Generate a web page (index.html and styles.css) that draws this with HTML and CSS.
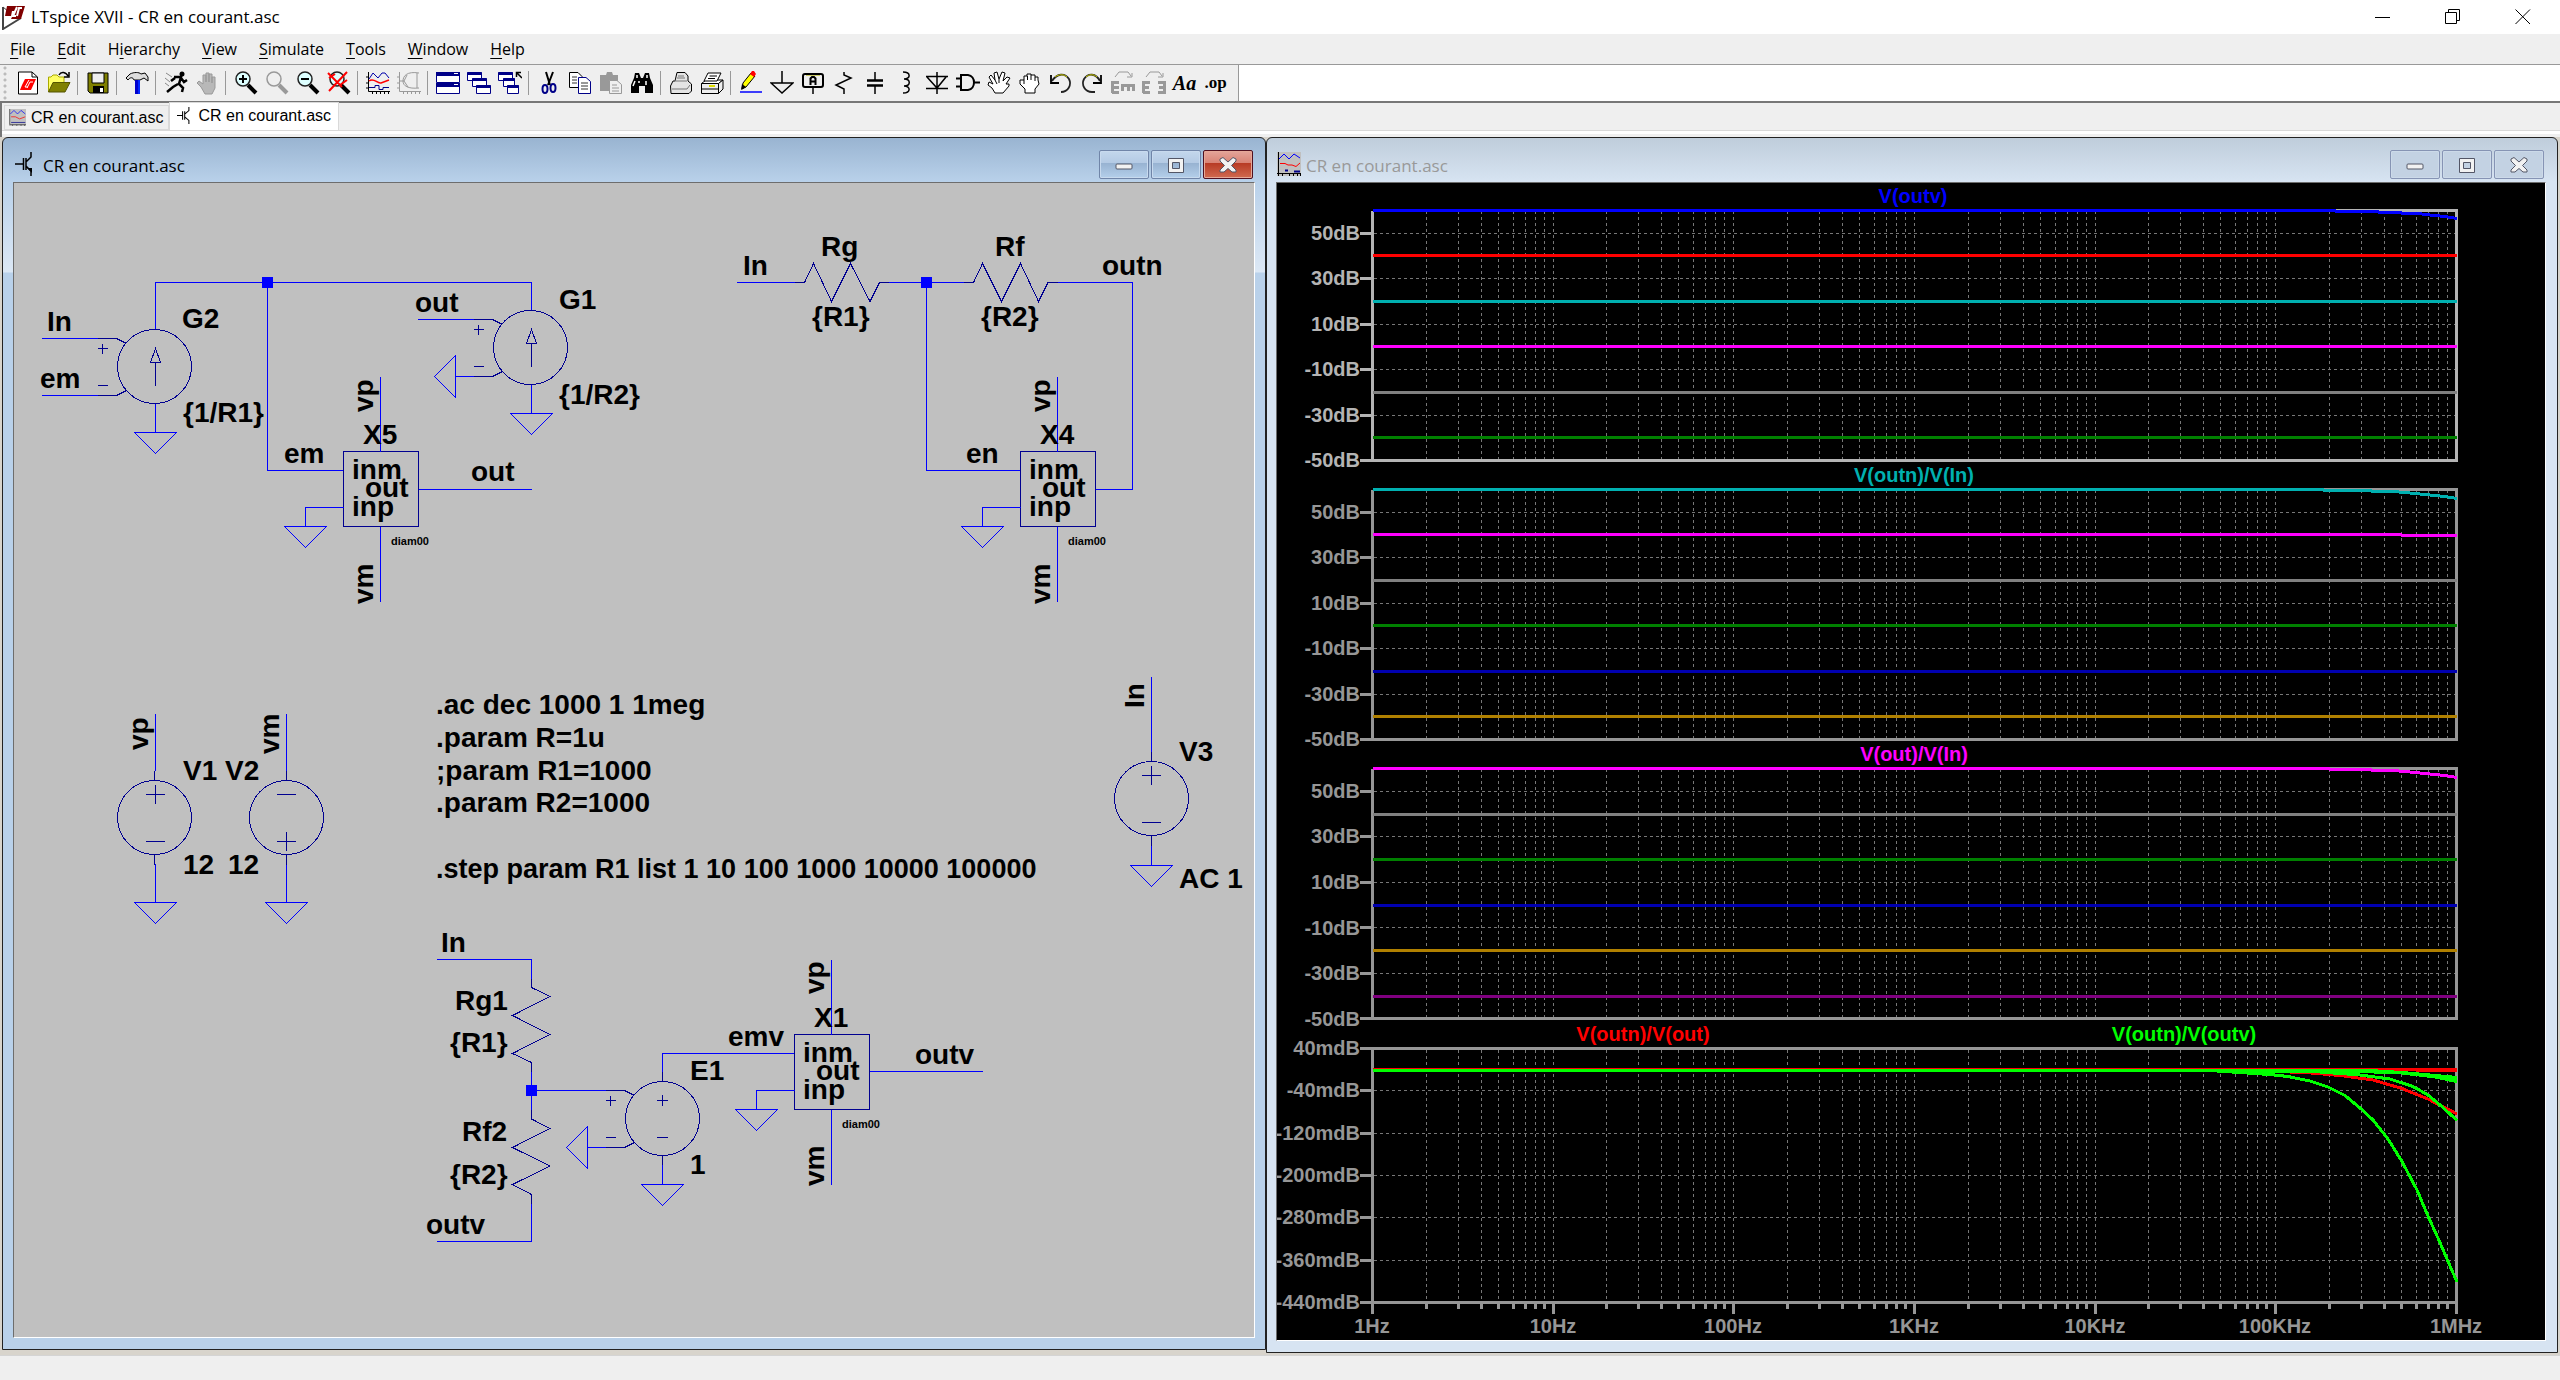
FILE: index.html
```html
<!DOCTYPE html>
<html lang="en">
<head>
<meta charset="utf-8">
<title>LTspice XVII - CR en courant.asc</title>
<link rel="stylesheet" href="styles.css">
</head>
<body>
<header class="titlebar">
  <svg class="app-icon" width="24" height="26" viewBox="0 0 24 26"><path d="M1 3V25L19 14" fill="none" stroke="#444" stroke-width="2"/><path d="M1 3L7 8" stroke="#444" stroke-width="1"/><path d="M5 2H23L19 15H9L13 7H10L9 12H3Z" fill="#800000"/><path d="M15 3L11 12H14M20 4H17L15 12" stroke="#fff" stroke-width="2" fill="none"/></svg>
  <h1 class="app-title">LTspice XVII - CR en courant.asc</h1>
  <button class="sys" aria-label="Minimize"><svg width="16" height="16"><path d="M0 8.5H15"/></svg></button>
  <button class="sys" aria-label="Restore"><svg width="16" height="16"><path d="M.5 3.5H11.5V14.5H.5ZM3.5 3V.5H14.5V11.5H12"/></svg></button>
  <button class="sys" aria-label="Close"><svg width="16" height="16"><path d="M.5 .5L15 15M15 .5L.5 15"/></svg></button>
</header>
<nav class="menubar">
  <button><u>F</u>ile</button><button><u>E</u>dit</button><button>H<u>i</u>erarchy</button><button><u>V</u>iew</button><button><u>S</u>imulate</button><button><u>T</u>ools</button><button><u>W</u>indow</button><button><u>H</u>elp</button>
</nav>
<div class="toolrow">
<div class="toolbar" role="toolbar" aria-label="Tools">
  <button aria-label="New schematic"><svg viewBox="0 0 24 24"><path d="M2.500 1H16L21.500 6V23H2.500Z" fill="#fff" stroke="#000"/><path d="M16 1V6H21.500" fill="none" stroke="#000"/><path d="M9 8H20L15 19H4L6 14Z" fill="#f00"/><path d="M13 9L9 16H12M17 11H14L11 17" stroke="#fff" stroke-width="1" fill="none"/></svg></button>
  <button aria-label="Open"><svg viewBox="0 0 24 24"><path d="M1.500 21V6H4L6 4H10L12 6H17V11" fill="#ff6" stroke="#aa0"/><path d="M1.500 21L6 11.500H23L18 21Z" fill="#808000" stroke="#550"/><path d="M12 4C14 0 19 1 21 5M22 1V6H17" fill="none" stroke="#000" stroke-width="1.500"/></svg></button>
  <span class="sep"></span>
  <button aria-label="Save"><svg viewBox="0 0 24 24"><path d="M2 2H22V22H4L2 20Z" fill="#808000" stroke="#000"/><path d="M6 2H18V12H6Z" fill="#efefef" stroke="#000"/><path d="M7 15H18V22H7Z"/><path d="M14 17H17V21H14Z" fill="#fff"/></svg></button>
  <span class="sep"></span>
  <button aria-label="Control panel"><svg viewBox="0 0 24 24"><path d="M1 7L5 3C9 1 14 1 16 3L20 2L23 6V10L19 7L15 9H9C8 6 5 6 3 9Z" fill="#ddd" stroke="#000"/><path d="M10 9H15V23H10Z" fill="#00c"/><path d="M13 9H15V23H13Z" fill="#0028ff"/></svg></button>
  <span class="sep"></span>
  <button aria-label="Run"><svg viewBox="0 0 24 24"><circle cx="18" cy="3" r="2.500"/><path d="M10 6L17 6L15 13L19 17L18 21M17 7L20 11L23 9M11 7L7 10M14 13L9 16L3 21" fill="none" stroke="#000" stroke-width="2.500"/><path d="M2 2L8 6M1 7L6 11M1 12L5 15" stroke="#888" fill="none"/></svg></button>
  <button aria-label="Halt" disabled><svg viewBox="0 0 24 24"><path d="M6 16L2 12L4 10L8 13V4H11V11V2H14V11V3H17V12V6H20V17L17 23H10Z" fill="#b8b8b8" stroke="#999"/></svg></button>
  <span class="sep"></span>
  <button aria-label="Zoom in"><svg viewBox="0 0 24 24"><circle cx="9" cy="8" r="7" fill="#dff" stroke="#222" stroke-width="1.500"/><path d="M9 4V12M5 8H13" stroke="#000" stroke-width="2"/><path d="M14 14L22 22" stroke="#000" stroke-width="4"/></svg></button>
  <button aria-label="Pan" disabled><svg viewBox="0 0 24 24"><circle cx="9" cy="8" r="7" fill="none" stroke="#999" stroke-width="1.500"/><path d="M14 14L22 22" stroke="#999" stroke-width="4"/></svg></button>
  <button aria-label="Zoom back"><svg viewBox="0 0 24 24"><circle cx="9" cy="8" r="7" fill="#dff" stroke="#222" stroke-width="1.500"/><path d="M5 8H13" stroke="#000" stroke-width="2"/><path d="M14 14L22 22" stroke="#000" stroke-width="4"/></svg></button>
  <button aria-label="Zoom full extents"><svg viewBox="0 0 24 24"><circle cx="10" cy="8" r="7" fill="#dff" stroke="#222" stroke-width="1.500"/><path d="M14 14L22 22" stroke="#000" stroke-width="4"/><path d="M1 2L15 16M20 1L2 20M2 7L8 3M13 14L20 9" stroke="#f00" stroke-width="2"/></svg></button>
  <span class="sep"></span>
  <button aria-label="Autorange"><svg viewBox="0 0 24 24"><path d="M2.500 1V20.500H24M0 6H2M0 12H2M0 17H2M6.500 20V23M10.500 20V23M14.500 20V23M18.500 20V23M22.500 20V23" stroke="#000" fill="none"/><path d="M3 8L7 2L12 7L16 2L19 2L23 7" stroke="#00a" fill="none"/><path d="M3 10C8 6 11 13 15 12L23 9" stroke="#f00" stroke-width="1.500" fill="none"/><path d="M3 16.500H9V14.500H13V18.500H17V16.500H23" stroke="#008" fill="none"/></svg></button>
  <button aria-label="Nyquist" disabled><svg viewBox="0 0 24 24"><path d="M2.500 1V20.500H24M0 6H2M0 12H2M0 17H2M6.500 20V23M10.500 20V23M14.500 20V23M18.500 20V23M22.500 20V23M22 2C10 0 6 5 6 10C6 15 11 18 22 17M3 10H7L10 4M7 10L11 16M20 2V17" stroke="#999" fill="none"/></svg></button>
  <span class="sep"></span>
  <button aria-label="Tile windows"><svg viewBox="0 0 24 24"><path d="M.5 1.500H23.500V11.500H.5ZM.5 12.500H23.500V22.500H.5Z" fill="#fff" stroke="#008"/><path d="M0 1H24V5H0ZM0 12H24V16H0Z" fill="#008"/><path d="M18 2.500H22M18 13.500H22" stroke="#fff"/></svg></button>
  <button aria-label="Cascade windows"><svg viewBox="0 0 24 24"><g fill="#fff" stroke="#008"><path d="M.5 1.500H14.500V9.500H.5Z"/><path d="M.5 2.500H14.500" stroke-width="3"/><path d="M5.500 7.500H19.500V15.500H5.500Z"/><path d="M5.500 8.500H19.500" stroke-width="3"/><path d="M9.500 14.500H23.500V22.500H9.500Z"/><path d="M9.500 15.500H23.500" stroke-width="3"/></g></svg></button>
  <button aria-label="Close all"><svg viewBox="0 0 24 24"><g fill="#fff" stroke="#008"><path d="M.5 1.500H14.500V9.500H.5Z"/><path d="M.5 2.500H14.500" stroke-width="3"/><path d="M5.500 7.500H16.500V15.500H5.500Z"/><path d="M5.500 8.500H16.500" stroke-width="3"/><path d="M9.500 14.500H20.500V22.500H9.500Z"/><path d="M9.500 15.500H20.500" stroke-width="3"/></g><path d="M18.500 6V1.500H23M19 2L24 7" stroke="#000" stroke-width="1.500" fill="none"/></svg></button>
  <span class="sep"></span>
  <button aria-label="Cut"><svg viewBox="0 0 24 24"><path d="M9 1L13 14M16 1L11 14" stroke="#000" stroke-width="2"/><g fill="none" stroke="#008" stroke-width="2"><ellipse cx="8" cy="18" rx="2.500" ry="4"/><ellipse cx="16" cy="17" rx="2.500" ry="4"/></g></svg></button>
  <button aria-label="Copy"><svg viewBox="0 0 24 24"><g fill="#fff" stroke="#000"><path d="M1.500 1.500H10L14 5.500V16.500H1.500Z"/><path d="M10.500 6.500H18L22.500 10.500V22.500H10.500Z" stroke="#008"/></g><path d="M4 6H9M4 9H9M4 12H9M13 12H20M13 15H20M13 18H20" stroke="#333"/></svg></button>
  <button aria-label="Paste" disabled><svg viewBox="0 0 24 24"><path d="M1 4H7L8 1H13L14 4H19V20H1Z" fill="#999"/><path d="M10.500 9.500H18L22.500 13.500V22.500H10.500Z" fill="#efefef" stroke="#999"/><path d="M13 14H18M13 17H20M13 20H20M6 5H15" stroke="#999"/></svg></button>
  <button aria-label="Find"><svg viewBox="0 0 24 24"><path d="M5 2H9L11 7H13L15 2H19L20 7L23 14V22H15V15H9V22H1V14L4 7Z"/><path d="M7 4V7M17 4V7M5 10L3 15M16 10V14M9 10V12" stroke="#fff" stroke-width="1.500"/></svg></button>
  <span class="sep"></span>
  <button aria-label="Print"><svg viewBox="0 0 24 24"><path d="M6 10L8 1.500H16L19 5V10L22.500 13V20L20 22.500H2L1.500 15L4 10Z" fill="#e4e4e4" stroke="#000"/><path d="M5 10H18M3 18H18M18 18L21 14M9 5H15M8 7H16" stroke="#777" fill="none"/></svg></button>
  <button aria-label="Print setup"><svg viewBox="0 0 24 24"><path d="M1.500 12.500L6 9H23L18.500 12.500Z" fill="#fff" stroke="#000"/><path d="M8 2H21L17 10H4Z" fill="#fff" stroke="#000"/><path d="M9.500 5H17M8 7.500H15" stroke="#000"/><path d="M1.500 12.500H18.500V22.500H1.500ZM18.500 12.500L23 9V18L18.500 22.500" fill="#eee" stroke="#000"/><path d="M2 18H18" stroke="#000"/><path d="M9 15H15" stroke="#dd0" stroke-width="2"/></svg></button>
  <span class="sep"></span>
  <button aria-label="Draw wire"><svg viewBox="0 0 24 24"><path d="M4 12L12 2L16 5L7 16L3 18Z" fill="#ff0" stroke="#000"/><path d="M3 13L7 16L2 19Z"/><path d="M11 3L13 0H15L17 3L15 6Z" fill="#f00"/><path d="M1 21H23" stroke="#00f" stroke-width="1.500"/></svg></button>
  <button aria-label="Ground"><svg viewBox="0 0 24 24"><path d="M12 0V12M1 12H23L12 22Z" stroke="#000" stroke-width="1.500" fill="none"/></svg></button>
  <button aria-label="Label net"><svg viewBox="0 0 24 24"><rect x="2" y="3" width="20" height="13" rx="2" fill="none" stroke="#000" stroke-width="2"/><path d="M5 4.500H19" stroke="#cc6"/><path d="M12 16V23" stroke="#000" stroke-width="1.500"/><path d="M9.500 14V7.500L11 6H13L14.500 7.500V14M9.500 10.500H14.500" stroke="#000" stroke-width="2" fill="none"/></svg></button>
  <button aria-label="Resistor"><svg viewBox="0 0 24 24"><path d="M12 1V4L19 7L4 14L12 18V23" stroke="#000" stroke-width="1.500" fill="none"/></svg></button>
  <button aria-label="Capacitor"><svg viewBox="0 0 24 24"><path d="M12 1V10M12 14V23" stroke="#000" stroke-width="1.500"/><path d="M4 9.500H20M4 14.500H20" stroke="#000" stroke-width="2.500"/></svg></button>
  <button aria-label="Inductor"><svg viewBox="0 0 24 24"><path d="M9 1C17 1 17 8 10 8C17 8 17 15 10 15C17 15 17 22 9 22" stroke="#000" stroke-width="1.500" fill="none"/></svg></button>
  <button aria-label="Diode"><svg viewBox="0 0 24 24"><path d="M12 1V23M1 5.500H23M2 6L12 17L21 6M1 17.500H23" stroke="#000" stroke-width="1.500" fill="none"/></svg></button>
  <button aria-label="Component"><svg viewBox="0 0 24 24"><path d="M5 4H12C20 5 20 18 12 19H5ZM0 7.500H5M0 15.500H5M18 11.500H24" stroke="#000" stroke-width="2" fill="none"/></svg></button>
  <button aria-label="Move"><svg viewBox="0 0 24 24"><path d="M8 22L5 17L1 14L2 11L6 13L2 6L4 4L8 9L7 2L10 1L12 8L15 1L18 2L16 10L20 6L23 7L19 13L22 13V15L16 22Z" fill="#fff" stroke="#000"/><path d="M8 9L10 13M12 8V12" stroke="#000"/></svg></button>
  <button aria-label="Drag"><svg viewBox="0 0 24 24"><path d="M7 22V18L2 13V9H6V5H9V3H13V4H17V6H20V9L21 13L17 18V22Z" fill="#fff" stroke="#000"/><path d="M6 9V13M9.500 5V9M13 4V9M17 6V10" stroke="#000"/></svg></button>
  <button aria-label="Undo"><svg viewBox="0 0 24 24"><path d="M3 10C8 2 16 2 20 8C23 14 19 21 12 21" fill="none" stroke="#222" stroke-width="1.800"/><path d="M6 6C10 3 15 3 18 6" fill="none" stroke="#cc0"/><path d="M2 4V12H10" fill="none" stroke="#000" stroke-width="1.800"/></svg></button>
  <button aria-label="Redo"><svg viewBox="0 0 24 24"><path d="M20 10C16 2 8 2 4 8C1 14 5 21 12 21H15" fill="none" stroke="#222" stroke-width="1.800"/><path d="M6 6C9 3 14 3 17 6" fill="none" stroke="#cc0"/><path d="M21 4V12H13" fill="none" stroke="#000" stroke-width="1.800"/></svg></button>
  <button aria-label="Rotate" disabled><svg viewBox="0 0 24 24"><path d="M4 6L8 1H17L20 5M21 2V6H16" fill="none" stroke="#999"/><path d="M8 11.500H1.500V22M8 16.500H2M8 21.500H1M10 14.500H24M11.500 14V20M17.500 14V20M22.500 14V20" fill="none" stroke="#999" stroke-width="3"/></svg></button>
  <button aria-label="Mirror" disabled><svg viewBox="0 0 24 24"><path d="M4 6L8 1H17L20 5M21 2V6H16" fill="none" stroke="#999"/><path d="M8 11.500H1.500V22M7 16.500H2M8 21.500H1M16 11.500H22.500V22M17 16.500H23M16 21.500H24" fill="none" stroke="#999" stroke-width="3"/></svg></button>
  <button class="txt-aa">Aa</button>
  <button class="txt-op">.op</button>
</div>
</div>
<nav class="tabs">
  <button class="tab"><svg width="17" height="17" viewBox="0 0 24 24"><rect width="24" height="24" fill="#c0c0c0"/><path d="M1 0V22H24M5 22V24M11 22V24M17 22V24M22 22V24" stroke="#444" fill="none"/><path d="M2 7L7 2L12 7L17 2L23 7" stroke="#00f" fill="none"/><path d="M3 11H9L15 14L23 11" stroke="#f00" fill="none"/><path d="M3 19H23" stroke="#008"/></svg>CR en courant.asc</button>
  <button class="tab active"><svg width="14" height="17" viewBox="0 0 20 24"><path d="M0 12H8M8 6V18M11 6V18M11 10L17 5V0M11 14L17 19V24" stroke="#000" stroke-width="1.500" fill="none"/></svg>CR en courant.asc</button>
</nav>
<main class="mdi">
<section class="win win-sch">
  <div class="caption">
    <svg class="cap-icon" width="20" height="24"><path d="M0 12H8M8.500 6V18M11 6V18M11 10L16 5V0M11 14L16 19V24" stroke="#000" stroke-width="1.500" fill="none"/><path d="M12 16H17V21Z"/></svg>
    <h2>CR en courant.asc</h2>
    <button class="cap-btn" aria-label="Minimize"><svg width="20" height="20"><rect x="2" y="9" width="16" height="5" rx="1"/></svg></button>
    <button class="cap-btn" aria-label="Maximize"><svg width="20" height="20"><path fill-rule="evenodd" d="M2.500 3.500H17.500V17.500H2.500ZM6.500 7.500V13.500H13.500V7.500Z"/></svg></button>
    <button class="cap-btn close" aria-label="Close"><svg width="20" height="20"><path d="M2 4L5 2.500L10 7L15 2.500L18 4V6L13.500 10.500L18 15V17H14L10 13.500L6 17H2V15L6.500 10.500L2 6Z"/></svg></button>
  </div>
  <svg class="client sch" viewBox="14 183 1240 1154" preserveAspectRatio="xMinYMin meet">
    <defs>
      <path id="gnd" d="M-21 0H21L0 21Z"/>
      <path id="gndl" d="M0 -21V21L-21 0Z"/>
      <g id="ctl"><circle r="37"/><path d="M-57 -28H-38L-28 -23M-57 29H-38L-28 24M-57 -18H-47M-52 -23V-13M-57 19H-47"/></g>
      <g id="src"><circle r="37"/><path d="M0 -47V-37M0 37V47"/></g>
      <path id="arrow" d="M0 19V-4M-5 -4H5L0 -18Z"/>
      <g id="blk"><rect class="part" x="343.500" y="451.500" width="75" height="75"/><path class="wire" d="M380.500 376.500V451.500M380.500 526.500V601.500M343.500 507.500H305.500V526.500"/><use href="#gnd" class="wire" x="305.500" y="526.500"/></g>
    </defs>
    <g class="wire">
      <path d="M155.500 329V282.500H531.500V310M267.500 282.500V470.500H343.500M42 338.500H99M42 395.500H99M155.500 403V432.500M418.500 489.500H532M418 319.500H475M455.500 376.500H475M531.500 384V413.500"/>
      <use href="#gnd" x="155.500" y="432.500"/><use href="#gnd" x="531.500" y="413.500"/><use href="#gndl" x="455.500" y="376.500"/>
      <path d="M737 282.500H795M889 282.500H965M926.500 282.500V470.500H1020.500M1058 282.500H1132.500V489.500H1095.500"/>
      <path d="M155.500 714V771M155.500 864V902.500M286.500 714V771M286.500 864V902.500M1151.500 677V752M1151.500 845V865.500"/>
      <use href="#gnd" x="155.500" y="902.500"/><use href="#gnd" x="286.500" y="902.500"/><use href="#gnd" x="1151.500" y="865.500"/>
      <path d="M437 959.500H531.500V979M531.500 1072V1110M531.500 1204V1241.500H437M531.500 1090.500H606M587.500 1147.500H606M662.500 1072V1053.500H794.500M662.500 1165V1184.500M869.500 1071.500H983"/>
      <use href="#gndl" x="587.500" y="1147.500"/><use href="#gnd" x="662.500" y="1184.500"/>
    </g>
    <g class="part">
      <use href="#ctl" x="154.500" y="366.500"/><use href="#arrow" x="155.500" y="366.500"/>
      <use href="#ctl" x="530.500" y="347.500"/><use href="#arrow" x="531.500" y="347.500"/>
      <use href="#ctl" x="662.500" y="1118.500"/><path d="M662.500 1072V1081M662.500 1156V1165M657 1100.500H668M662.500 1095V1106M657 1137.500H668"/>
      <path d="M795 282.500H804.500L813.500 263.500L831.500 301.500L850.500 263.500L870 301.500L879.500 282.500H889M964 282.500H973.500L982.500 263.500L1001.500 301.500L1020.500 263.500L1038.500 301.500L1048 282.500H1058"/>
      <path d="M531.500 979V987.500L550 996.500L512.500 1015.500L550 1034.500L512.500 1053.500L531.500 1062.500V1072M531.500 1110V1119L550 1128.500L512.500 1147.500L550 1166L512.500 1184.500L531.500 1194.500V1204"/>
      <use href="#src" x="154.500" y="817.500"/><path d="M146 794.500H165M155.500 785V804M146 841.500H165"/>
      <use href="#src" x="286.500" y="817.500"/><path d="M277 794.500H296M286.500 832V851M277 841.500H296"/>
      <use href="#src" x="1151.500" y="798.500"/><path d="M1142 775.500H1161M1151.500 766V785M1142 822.500H1161"/>
    </g>
    <use href="#blk"/><use href="#blk" x="677"/><use href="#blk" x="451" y="583"/>
    <path class="node" d="M262 277h11v11h-11zM921 277h11v11h-11zM526 1085h11v11h-11z"/>
    <g class="lbl">
      <text x="47" y="331">In</text><text x="40" y="388">em</text><text x="182" y="328">G2</text><text x="183" y="422">{1/R1}</text>
      <text x="415" y="312">out</text><text x="559" y="309">G1</text><text x="559" y="404">{1/R2}</text>
      <text x="284" y="463">em</text><text x="471" y="481">out</text>
      <text x="363" y="444">X5</text><text x="352" y="479">inm</text><text x="365" y="497">out</text><text x="352" y="516">inp</text>
      <text transform="translate(373 412) rotate(-90)">vp</text><text transform="translate(373 604) rotate(-90)">vm</text>
      <text x="743" y="275">In</text><text x="821" y="256">Rg</text><text x="812" y="326">{R1}</text><text x="995" y="256">Rf</text><text x="981" y="326">{R2}</text><text x="1102" y="275">outn</text><text x="966" y="463">en</text>
      <text x="1040" y="444">X4</text><text x="1029" y="479">inm</text><text x="1042" y="497">out</text><text x="1029" y="516">inp</text>
      <text transform="translate(1050 412) rotate(-90)">vp</text><text transform="translate(1050 604) rotate(-90)">vm</text>
      <text transform="translate(148 750) rotate(-90)">vp</text><text transform="translate(279 754) rotate(-90)">vm</text><text transform="translate(1144 708) rotate(-90)">In</text>
      <text x="183" y="780">V1</text><text x="225" y="780">V2</text><text x="183" y="874">12</text><text x="228" y="874">12</text>
      <text x="1179" y="761">V3</text><text x="1179" y="888">AC 1</text>
      <text x="441" y="952">In</text><text x="455" y="1010">Rg1</text><text x="450" y="1052">{R1}</text><text x="462" y="1141">Rf2</text><text x="450" y="1184">{R2}</text><text x="426" y="1234">outv</text>
      <text x="690" y="1080">E1</text><text x="690" y="1174">1</text><text x="728" y="1046">emv</text><text x="915" y="1064">outv</text>
      <text x="814" y="1027">X1</text><text x="803" y="1062">inm</text><text x="816" y="1080">out</text><text x="803" y="1099">inp</text>
      <text transform="translate(824 994) rotate(-90)">vp</text><text transform="translate(824 1186) rotate(-90)">vm</text>
    </g>
    <g class="tiny"><text x="391" y="545">diam00</text><text x="1068" y="545">diam00</text><text x="842" y="1128">diam00</text></g>
    <g class="dir">
      <text x="436" y="714">.ac dec 1000 1 1meg</text><text x="436" y="747">.param R=1u</text><text x="436" y="780">;param R1=1000</text><text x="436" y="812">.param R2=1000</text><text class="step" x="436" y="878">.step param R1 list 1 10 100 1000 10000 100000</text>
    </g>
  </svg>
</section>
<section class="win win-plot">
  <div class="caption">
    <svg class="cap-icon" width="24" height="24"><rect width="24" height="24" fill="#c0c0c0"/><path d="M1.500 0V24M0 21.500H24M5.500 22V24M12.500 22V24M16.500 22V24M20.500 22V24M23.500 22V24" stroke="#000" fill="none"/><path d="M2 7L7 2L12 7L17 2L23 6" stroke="#00f" fill="none"/><path d="M3 11.500H8L11 13H15L19 14.500L23 11" stroke="#f00" fill="none"/><path d="M8 18.500H11M17 19.500H23" stroke="#008" stroke-width="2"/></svg>
    <h2>CR en courant.asc</h2>
    <button class="cap-btn" aria-label="Minimize"><svg width="20" height="20"><rect x="2" y="9" width="16" height="5" rx="1"/></svg></button>
    <button class="cap-btn" aria-label="Maximize"><svg width="20" height="20"><path fill-rule="evenodd" d="M2.500 3.500H17.500V17.500H2.500ZM6.500 7.500V13.500H13.500V7.500Z"/></svg></button>
    <button class="cap-btn" aria-label="Close"><svg width="20" height="20"><path d="M2 4L5 2.500L10 7L15 2.500L18 4V6L13.500 10.500L18 15V17H14L10 13.500L6 17H2V15L6.500 10.500L2 6Z"/></svg></button>
  </div>
  <svg class="client plot" viewBox="1277 183 1268 1157" preserveAspectRatio="xMinYMin meet">
    <defs>
      <path id="dec" d="M54.500 0V251M86.500 0V251M109.500 0V251M126.500 0V251M141.500 0V251M153.500 0V251M163.500 0V251M172.500 0V251M181.500 0V251"/>
      <g id="grid"><use href="#dec" x="1372"/><use href="#dec" x="1552"/><use href="#dec" x="1733"/><use href="#dec" x="1914"/><use href="#dec" x="2094"/><use href="#dec" x="2275"/></g>
      <path id="rows" d="M1374 23H2456M1374 68H2456M1374 114H2456M1374 159H2456M1374 205H2456"/>
      <path id="frame" d="M1372.500 0H2456.500V250H1360M1372.500 0V250M1360 23H1373M1360 68H1373M1360 114H1373M1360 159H1373M1360 205H1373"/>
      <path id="mt" d="M54.500 0V7M86.500 0V7M109.500 0V7M126.500 0V7M141.500 0V7M153.500 0V7M163.500 0V7M172.500 0V7M181.500 0V12"/>
    </defs>
    <g class="grid">
      <use href="#grid" y="211"/><use href="#grid" y="490"/><use href="#grid" y="769"/><use href="#grid" y="1050"/>
      <use href="#rows" y="210.500"/><use href="#rows" y="489.500"/><use href="#rows" y="768.500"/>
      <path d="M1374 1090.500H2456M1374 1133.500H2456M1374 1175.500H2456M1374 1217.500H2456M1374 1260.500H2456"/>
    </g>
    <use href="#frame" class="axis axis-on" y="210.500"/><use href="#frame" class="axis" y="489.500"/><use href="#frame" class="axis" y="768.500"/>
    <g class="axis">
      <path d="M1360 1048.500H2456.500V1314M1360 1302.500H2456M1372.500 1048V1314M1360 1090.500H1373M1360 1133.500H1373M1360 1175.500H1373M1360 1217.500H1373M1360 1260.500H1373"/>
      <use href="#mt" x="1372" y="1302"/><use href="#mt" x="1552" y="1302"/><use href="#mt" x="1733" y="1302"/><use href="#mt" x="1914" y="1302"/><use href="#mt" x="2094" y="1302"/><use href="#mt" x="2275" y="1302"/>
    </g>
    <g class="trace">
      <path stroke="#00f" d="M1373 210.500H2334L2337 211.500H2377L2380 212.500H2400L2403 213.500H2418L2430 215L2445 216.500L2457 218.500"/>
      <path stroke="#f00" d="M1373 255.500H2457"/><path stroke="#00b0b0" d="M1373 301.500H2457"/><path stroke="#f0f" d="M1373 346.500H2457"/><path stroke="gray" d="M1373 392.500H2457"/><path stroke="green" d="M1373 437.500H2457"/>
      <path stroke="#00b0b0" d="M1373 489.500H2322L2325 490.500H2370L2373 491.500H2394L2410 493L2430 495L2445 496.500L2457 498.500"/>
      <path stroke="#f0f" d="M1373 534.500H2400L2403 535.500H2457"/><path stroke="gray" d="M1373 580.500H2457"/><path stroke="green" d="M1373 625.500H2457"/><path stroke="#0000b0" d="M1373 671.500H2457"/><path stroke="#b08000" d="M1373 716.500H2457"/>
      <path stroke="#f0f" d="M1373 768.500H2328L2331 769.500H2370L2373 770.500H2394L2410 772L2430 774L2445 775.500L2457 777.500"/>
      <path stroke="gray" d="M1373 814.500H2457"/><path stroke="green" d="M1373 859.500H2457"/><path stroke="#0000b0" d="M1373 905.500H2457"/><path stroke="#b08000" d="M1373 950.500H2457"/><path stroke="purple" d="M1373 996.500H2457"/>
      <path stroke="#f00" d="M1373 1069.500H2457M2373 1069.500L2457 1070.500"/>
      <path stroke="#f00" d="M2275 1071.500L2305 1072.500L2340 1075.500L2373 1080L2402 1088.500L2428 1099L2457 1114"/>
      <path stroke="#0f0" d="M1373 1070.500H2209L2239 1072.500L2270 1074.500L2288 1076.500L2310 1081L2328 1087L2345 1095.500L2363 1110.500L2373 1120L2388 1139L2402 1161.500L2417 1190L2428 1216L2438 1238L2447 1259L2457 1282"/>
      <path stroke="#0f0" d="M2209 1070.500L2313 1071.500L2360 1075L2390 1079L2413 1086.500L2428 1095L2443 1107.500L2457 1120.500"/>
      <path stroke="#0f0" d="M2209 1070.500H2370L2402 1072.500L2430 1075L2457 1077.500M2330 1070.500L2402 1073L2430 1076L2457 1081.500M2402 1073L2457 1079.500"/>
    </g>
    <g class="ylab ylab-on"><text x="1360" y="240">50dB</text><text x="1360" y="285">30dB</text><text x="1360" y="331">10dB</text><text x="1360" y="376">-10dB</text><text x="1360" y="422">-30dB</text><text x="1360" y="467">-50dB</text></g>
    <g class="ylab">
      <text x="1360" y="519">50dB</text><text x="1360" y="564">30dB</text><text x="1360" y="610">10dB</text><text x="1360" y="655">-10dB</text><text x="1360" y="701">-30dB</text><text x="1360" y="746">-50dB</text>
      <text x="1360" y="798">50dB</text><text x="1360" y="843">30dB</text><text x="1360" y="889">10dB</text><text x="1360" y="935">-10dB</text><text x="1360" y="980">-30dB</text><text x="1360" y="1026">-50dB</text>
      <text x="1360" y="1055">40mdB</text><text x="1360" y="1097">-40mdB</text><text x="1360" y="1140">-120mdB</text><text x="1360" y="1182">-200mdB</text><text x="1360" y="1224">-280mdB</text><text x="1360" y="1267">-360mdB</text><text x="1360" y="1309">-440mdB</text>
    </g>
    <g class="xlab"><text x="1372" y="1333">1Hz</text><text x="1553" y="1333">10Hz</text><text x="1733" y="1333">100Hz</text><text x="1914" y="1333">1KHz</text><text x="2095" y="1333">10KHz</text><text x="2275" y="1333">100KHz</text><text x="2456" y="1333">1MHz</text></g>
    <g class="ttl"><text x="1913" y="203" fill="#00f">V(outv)</text><text x="1914" y="482" fill="#00b0b0">V(outn)/V(In)</text><text x="1914" y="761" fill="#f0f">V(out)/V(In)</text><text x="1643" y="1041" fill="#f00">V(outn)/V(out)</text><text x="2184" y="1041" fill="#0f0">V(outn)/V(outv)</text></g>
  </svg>
</section>
</main>
<footer class="status"></footer>
</body>
</html>
```
FILE: styles.css
```css
* { box-sizing: border-box; }
body {
  margin: 0;
  min-height: 100vh;
  display: flex;
  flex-direction: column;
  background: #efefef;
  color: #000;
  font: 16px/20px "Open Sans", "Noto Sans", sans-serif;
}
button { font: inherit; color: inherit; background: none; border: 0; padding: 0; margin: 0; }
h1, h2 { margin: 0; font: inherit; font-size: 17px; }

.titlebar { display: flex; height: 34px; background: #fff; padding: 0 2px; }
.app-icon { margin-top: 4px; }
.app-title { flex: 1; padding: 7px 0 0 5px; }
.sys { width: 70px; height: 34px; display: grid; place-items: center; }
.sys svg { fill: none; stroke: #000; }

.menubar { display: flex; gap: 22px; height: 30px; padding: 0 10px; align-items: center; }
.menubar u { text-underline-offset: 3px; }

.toolrow { background: #fff; border-top: 1px solid #999; border-bottom: 2px solid #777; height: 39px; }
.toolbar {
  display: inline-flex;
  align-items: center;
  height: 36px;
  padding: 0 7px 0 12px;
  background: #efefef;
  border-right: 1px solid #999;
  background-image: radial-gradient(circle, #bbb 1px, transparent 2px);
  background-size: 10px 6px;
  background-repeat: repeat-y;
}
.toolbar button { width: 31px; height: 32px; display: grid; place-items: center; }
.toolbar svg { width: 24px; height: 24px; }
.sep { width: 1px; height: 24px; margin: 0 4px 0 3px; background: #999; }
.toolbar .txt-aa { font: italic bold 20px/24px "Liberation Serif", serif; }
.toolbar .txt-op { font: bold 17px/24px "Liberation Serif", serif; }

.tabs {
  display: flex;
  align-items: flex-end;
  height: 34px;
  padding: 0 2px 6px;
  font: 16px/20px "Liberation Sans", sans-serif;
  background: linear-gradient(#d9d9d9, #d9d9d9) 0 27px / 100% 1px no-repeat, linear-gradient(#fff, #fff) 0 28px / 100% 3px no-repeat, #efefef;
  border-left: 2px solid #777;
}
.tab { display: flex; gap: 5px; align-items: center; height: 25px; padding: 0 4px; border: 1px solid #d9d9d9; margin-bottom: 1px; }
.tab.active { height: 28px; padding: 0 7px 2px; gap: 8px; background: #fff; border-bottom: 0; }

.mdi { flex: 1; display: grid; grid-template-columns: 1264fr 1292fr; padding: 0 2px; background: #d8d4cc; }
.win { display: flex; flex-direction: column; border: 1px solid #222; border-radius: 6px 6px 0 0; min-width: 0; }
.win-sch { margin-bottom: 5px; padding: 0 10px 11px; background: linear-gradient(#99b4d1, #b9d1ea 44px, #dce8f5 134px, #b9d1ea 135px); }
.win-plot { margin-bottom: 2px; padding: 0 11px 11px 9px; background: linear-gradient(#bfcddb, #d7e4f2 44px); }
.caption { display: flex; gap: 2px; height: 44px; padding: 12px 2px 0 0; align-items: flex-start; }
.caption h2 { flex: 1; padding: 6px 0 0 6px; }
.win-sch .cap-icon { margin: 2px 0 0 2px; }
.win-plot .cap-icon { margin: 2px 0 0 1px; }
.win-plot h2 { color: #999; padding-left: 3px; }
.cap-btn { width: 50px; height: 29px; display: grid; place-items: center; border: 1px solid #7085a8; border-radius: 2px; background: linear-gradient(#c3d7ec, #b4cae4 44%, #98b3d2 46%, #b4cfea); box-shadow: inset 0 0 0 1px #c8daee; }
.win-plot .cap-btn { background: #c3d2e3; box-shadow: inset 0 0 0 1px #ccdae9; border-color: #8694b4; }
.cap-btn svg { fill: #f2f2f2; stroke: #535666; }
.cap-btn.close { border-color: #501020; background: linear-gradient(#e4a59a, #d98375 44%, #b83b25 46%, #d06a50); box-shadow: inset 0 0 0 1px #e5a898; }
.client { display: block; flex: 1; min-height: 0; width: 100%; border: 1px solid #fff; border-top-color: #6d6d6d; border-left-color: #6d6d6d; }

.sch { background: #c0c0c0; }
.sch text { font-family: "Liberation Sans", Arial, sans-serif; font-weight: bold; fill: #000; }
.lbl, .dir { font-size: 28px; }
.step { font-size: 27px; }
.tiny { font-size: 11px; }
.wire, .part { fill: none; shape-rendering: crispEdges; }
.wire { stroke: #00f; }
.part { stroke: #000090; }
.node { fill: #00f; }

.plot { background: #000; }
.plot text { font: bold 20px "Liberation Sans", Arial, sans-serif; }
.grid { fill: none; stroke: #777; stroke-dasharray: 3 3; shape-rendering: crispEdges; }
.axis { fill: none; stroke: #969696; stroke-width: 3; shape-rendering: crispEdges; }
.axis-on { stroke: #b4b4b4; }
.trace { fill: none; stroke-width: 3; shape-rendering: crispEdges; }
.ylab { fill: #969696; text-anchor: end; }
.ylab-on { fill: #b4b4b4; }
.xlab { fill: #969696; text-anchor: middle; }
.ttl { text-anchor: middle; }

.status { height: 25px; border-top: 1px solid #d4d4d4; background: #efefef; }
```
